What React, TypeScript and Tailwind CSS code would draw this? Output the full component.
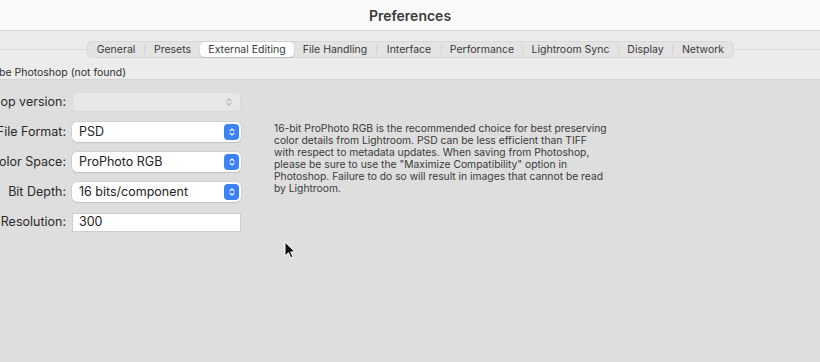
import { Fragment } from "react";

const TABS = [
  { label: "General", w: "w-[56px]" },
  { label: "Presets", w: "w-[55px]" },
  { label: "External Editing", w: "w-[94px]", active: true },
  { label: "File Handling", w: "w-[82px]" },
  { label: "Interface", w: "w-[64px]" },
  { label: "Performance", w: "w-[80px]" },
  { label: "Lightroom Sync", w: "w-[95px]" },
  { label: "Display", w: "w-[53px]" },
  { label: "Network", w: "w-[60px]" },
];

const DESCRIPTION = [
  "16-bit ProPhoto RGB is the recommended choice for best preserving",
  "color details from Lightroom. PSD can be less efficient than TIFF",
  "with respect to metadata updates. When saving from Photoshop,",
  'please be sure to use the "Maximize Compatibility" option in',
  "Photoshop. Failure to do so will result in images that cannot be read",
  "by Lightroom.",
];

function Chevrons({ color }: { color: string }) {
  return (
    <svg viewBox="0 0 10 12" className="h-[10px] w-[8px]" fill="none" stroke={color} strokeWidth="1.4" strokeLinecap="round" strokeLinejoin="round">
      <path d="M2.5 4.5 5 2l2.5 2.5" />
      <path d="M2.5 7.5 5 10l2.5-2.5" />
    </svg>
  );
}

function Select({ value, disabled }: { value?: string; disabled?: boolean }) {
  if (disabled) {
    return (
      <div className="flex h-[20px] w-[169px] items-center justify-end rounded-[5px] border border-[#d9d9d9] bg-[#e7e7e7] pr-[7px]">
        <Chevrons color="#b4b4b4" />
      </div>
    );
  }
  return (
    <div className="flex h-[20px] w-[169px] items-center justify-between rounded-[5px] bg-white pl-[7px] pr-[2px] shadow-[0_0_0_0.5px_rgba(0,0,0,0.12),0_1px_1px_rgba(0,0,0,0.08)]">
      <span className="text-[12.5px] text-[#232323]">{value}</span>
      <span className="flex h-[16px] w-[15px] items-center justify-center rounded-[4px] bg-[#3b82f6]">
        <Chevrons color="#ffffff" />
      </span>
    </div>
  );
}

export default function App() {
  return (
    <div className="relative flex h-[362px] w-[820px] flex-col overflow-hidden bg-[#dedede] font-['Inter','Noto_Sans',sans-serif] antialiased">
      {/* title bar */}
      <div className="flex h-[31px] shrink-0 items-center justify-center border-b border-[#dadada] bg-[#fafafa]">
        <span className="text-[14px] font-semibold text-[#3a3a3a]">Preferences</span>
      </div>

      {/* tabs + group title */}
      <div className="shrink-0 bg-[#ececec] pt-[10px]">
        <div className="flex items-center">
          <div className="h-px w-[87px] bg-[#d9d9d9]" />
          <div className="flex h-[17px] items-center rounded-[5px] border border-[#d8d8d8] bg-[#e3e3e3] text-[10.5px] text-[#3a3a3a]">
            {TABS.map((t, i) => (
              <Fragment key={t.label}>
                {i > 0 && !t.active && !TABS[i - 1].active && (
                  <span className="h-[9px] w-px bg-[#d0d0d0]" />
                )}
                <span
                  className={
                    t.active
                      ? `${t.w} flex h-[15px] items-center justify-center rounded-[4px] bg-white shadow-[0_0_1px_rgba(0,0,0,0.3),0_1px_1px_rgba(0,0,0,0.1)]`
                      : `${t.w} flex h-[15px] items-center justify-center`
                  }
                >
                  {t.label}
                </span>
              </Fragment>
            ))}
          </div>
          <div className="h-px flex-1 bg-[#d9d9d9]" />
        </div>
        <div className="ml-[-21px] mt-[8px] h-[13px] text-[10.5px] leading-[13px] text-[#2e2e2e]">
          Adobe Photoshop (not found)
        </div>
      </div>

      {/* group box */}
      <div className="flex flex-1 border-t border-[#d3d3d3] bg-[#dedede] pt-[12px]">
        <div className="ml-[-100px] flex flex-col gap-[10px]">
          {[
            { label: "Photoshop version:", control: <Select disabled /> },
            { label: "File Format:", control: <Select value="PSD" /> },
            { label: "Color Space:", control: <Select value="ProPhoto RGB" /> },
            { label: "Bit Depth:", control: <Select value="16 bits/component" /> },
            {
              label: "Resolution:",
              control: (
                <div className="flex h-[19px] w-[169px] items-center border border-[#cdcdcd] bg-white pl-[6px] text-[12.5px] text-[#232323]">
                  300
                </div>
              ),
            },
          ].map((row) => (
            <div key={row.label} className="flex h-[20px] items-center">
              <span className="w-[166px] whitespace-nowrap text-right text-[12.5px] text-[#2a2a2a]">{row.label}</span>
              <span className="ml-[6px]">{row.control}</span>
            </div>
          ))}
        </div>
        <div className="ml-[33px] mt-[30px] text-[10.3px] leading-[12.1px] text-[#3a3a3a]">
          {DESCRIPTION.map((line) => (
            <div key={line} className="whitespace-nowrap">
              {line}
            </div>
          ))}
        </div>
      </div>

      {/* mouse cursor */}
      <svg viewBox="0 0 12 18" className="absolute left-[284px] top-[241px] h-[18px] w-[12px]">
        <path d="M1 1v14l3.5-3.3 2.3 5.2 2.2-1-2.3-5H11z" fill="#111" stroke="#fff" strokeWidth="1" strokeLinejoin="round" />
      </svg>
    </div>
  );
}
